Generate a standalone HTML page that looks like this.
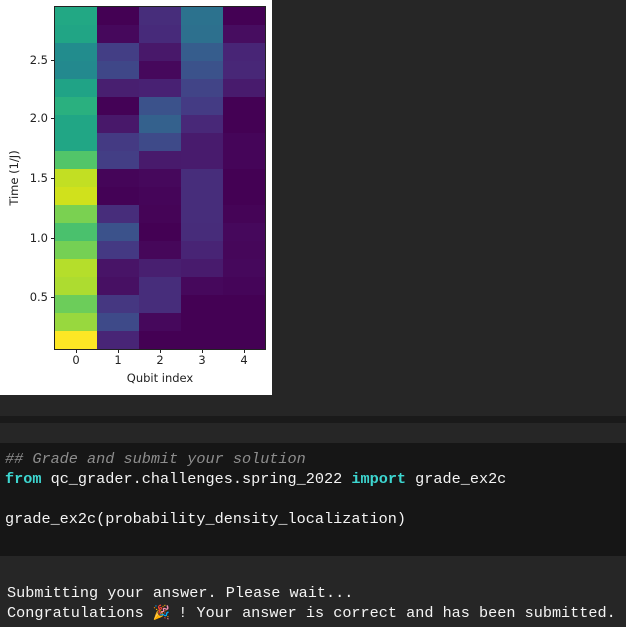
<!DOCTYPE html>
<html><head><meta charset="utf-8"><style>
*{margin:0;padding:0;box-sizing:border-box}
body{width:626px;height:627px;background:#262626;position:relative;overflow:hidden;font-family:"DejaVu Sans","Liberation Sans",sans-serif}
.plot{position:absolute;left:0;top:0;width:272px;height:395px;background:#fff}
.hm{position:absolute;left:55px;top:7px;width:210px;height:342px;display:grid;grid-template-columns:repeat(5,42px);grid-template-rows:repeat(19,1fr);grid-auto-flow:column;outline:1px solid #222}
.yt{position:absolute;right:224px;font-size:11.5px;color:#222;transform:translateY(-50%)}
.ytk{position:absolute;left:51px;width:4px;height:1px;background:#222}
.xt{position:absolute;top:353px;font-size:11.5px;color:#222;transform:translateX(-50%)}
.xtk{position:absolute;top:349px;width:1px;height:4px;background:#222}
.code{position:absolute;font-family:"Liberation Mono",monospace;font-size:15.2px;line-height:18px;color:#f4f4f4;white-space:pre;left:5px}
</style></head><body>
<div class="plot">
<div class="hm">
<div style="background:#22a884"></div><div style="background:#21a585"></div><div style="background:#228c8d"></div><div style="background:#23898e"></div><div style="background:#20a386"></div><div style="background:#2ab07f"></div><div style="background:#21a685"></div><div style="background:#21a685"></div><div style="background:#52c569"></div><div style="background:#c2df23"></div><div style="background:#d0e11c"></div><div style="background:#7ad151"></div><div style="background:#4ac16d"></div><div style="background:#75d054"></div><div style="background:#b5de2b"></div><div style="background:#addc30"></div><div style="background:#6ccd5a"></div><div style="background:#98d83e"></div><div style="background:#fde725"></div>
<div style="background:#440154"></div><div style="background:#46085c"></div><div style="background:#433e85"></div><div style="background:#3f4788"></div><div style="background:#481f70"></div><div style="background:#440256"></div><div style="background:#48186a"></div><div style="background:#443a83"></div><div style="background:#433e85"></div><div style="background:#450559"></div><div style="background:#440256"></div><div style="background:#472d7b"></div><div style="background:#3b528b"></div><div style="background:#443983"></div><div style="background:#481467"></div><div style="background:#471063"></div><div style="background:#453781"></div><div style="background:#3e4a89"></div><div style="background:#482576"></div>
<div style="background:#472d7b"></div><div style="background:#472a7a"></div><div style="background:#48186a"></div><div style="background:#46085c"></div><div style="background:#482173"></div><div style="background:#3b528b"></div><div style="background:#34618d"></div><div style="background:#3e4a89"></div><div style="background:#481a6c"></div><div style="background:#46085c"></div><div style="background:#450559"></div><div style="background:#450457"></div><div style="background:#440154"></div><div style="background:#46075a"></div><div style="background:#481f70"></div><div style="background:#472d7b"></div><div style="background:#472d7b"></div><div style="background:#46085c"></div><div style="background:#440154"></div>
<div style="background:#2c728e"></div><div style="background:#2d708e"></div><div style="background:#365d8d"></div><div style="background:#3b528b"></div><div style="background:#414487"></div><div style="background:#443b84"></div><div style="background:#482878"></div><div style="background:#481b6d"></div><div style="background:#481b6d"></div><div style="background:#472d7b"></div><div style="background:#472d7b"></div><div style="background:#472d7b"></div><div style="background:#472c7a"></div><div style="background:#482475"></div><div style="background:#481b6d"></div><div style="background:#46085c"></div><div style="background:#440154"></div><div style="background:#440154"></div><div style="background:#440154"></div>
<div style="background:#440154"></div><div style="background:#470d60"></div><div style="background:#482576"></div><div style="background:#482777"></div><div style="background:#481b6d"></div><div style="background:#440154"></div><div style="background:#440154"></div><div style="background:#450559"></div><div style="background:#450559"></div><div style="background:#440154"></div><div style="background:#440154"></div><div style="background:#450457"></div><div style="background:#46085c"></div><div style="background:#46075a"></div><div style="background:#46085c"></div><div style="background:#450559"></div><div style="background:#440154"></div><div style="background:#440154"></div><div style="background:#440154"></div>
</div>
<div class="ytk" style="top:60px"></div><div class="yt" style="top:60px">2.5</div>
<div class="ytk" style="top:118px"></div><div class="yt" style="top:118px">2.0</div>
<div class="ytk" style="top:178px"></div><div class="yt" style="top:178px">1.5</div>
<div class="ytk" style="top:238px"></div><div class="yt" style="top:238px">1.0</div>
<div class="ytk" style="top:297px"></div><div class="yt" style="top:297px">0.5</div>
<div class="xtk" style="left:76px"></div><div class="xt" style="left:76px">0</div>
<div class="xtk" style="left:118px"></div><div class="xt" style="left:118px">1</div>
<div class="xtk" style="left:160px"></div><div class="xt" style="left:160px">2</div>
<div class="xtk" style="left:202px"></div><div class="xt" style="left:202px">3</div>
<div class="xtk" style="left:244px"></div><div class="xt" style="left:244px">4</div>
<div style="position:absolute;left:160px;top:371px;transform:translateX(-50%);font-size:11.5px;color:#222">Qubit index</div>
<div style="position:absolute;left:14px;top:178px;transform:translate(-50%,-50%) rotate(-90deg);font-size:11.5px;color:#222;white-space:nowrap">Time (1/J)</div>
</div>
<div style="position:absolute;left:0;top:416px;width:626px;height:7px;background:#1a1a1a"></div>
<div style="position:absolute;left:0;top:443px;width:626px;height:113px;background:#161616"></div>
<div class="code" style="top:450px;color:#8d8d8d;font-style:italic">## Grade and submit your solution</div>
<div class="code" style="top:470px"><b style="color:#3dd6d0">from</b> qc_grader.challenges.spring_2022 <b style="color:#3dd6d0">import</b> grade_ex2c</div>
<div class="code" style="top:510px">grade_ex2c(probability_density_localization)</div>
<div class="code" style="top:584px;left:7px">Submitting your answer. Please wait...</div>
<div class="code" style="top:604px;left:7px">Congratulations <span style="font-size:14px;padding-right:8px">🎉</span>! Your answer is correct and has been submitted.</div>
</body></html>
